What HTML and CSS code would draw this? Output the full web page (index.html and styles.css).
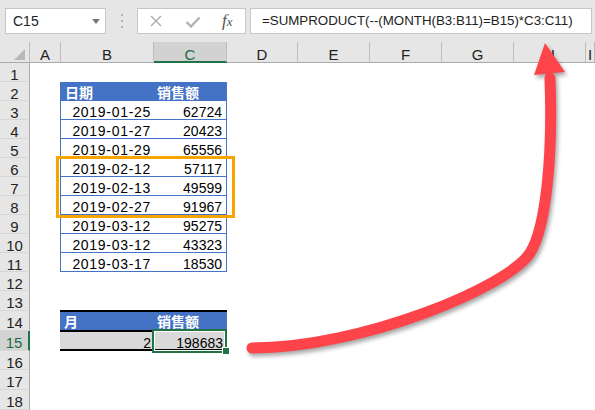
FILE: index.html
```html
<!DOCTYPE html>
<html lang="zh-CN">
<head>
<meta charset="utf-8">
<title>SUMPRODUCT</title>
<link rel="stylesheet" href="styles.css">
</head>
<body>
<div class="app">
  <div class="fbar">
    <div class="namebox"><span>C15</span><span class="caret"></span></div>
    <div class="grip"><i></i><i></i><i></i></div>
    <div class="btns">
      <svg class="ic-x" width="12" height="12" viewBox="0 0 12 12"><path d="M1 1L11 11M11 1L1 11"/></svg>
      <svg class="ic-ok" width="16" height="12" viewBox="0 0 16 12"><path d="M1.5 6L6 10.5L14.5 1.5"/></svg>
      <span class="fx"><i>f</i><i class="sub">x</i></span>
    </div>
    <div class="formula">=SUMPRODUCT(--(MONTH(B3:B11)=B15)*C3:C11)</div>
  </div>

  <div class="sheet">
    <div class="corner"><span class="tri"></span></div>
    <div class="ch">A</div>
    <div class="ch">B</div>
    <div class="ch on">C</div>
    <div class="ch">D</div>
    <div class="ch">E</div>
    <div class="ch">F</div>
    <div class="ch">G</div>
    <div class="ch">H</div>
    <div class="ch">I</div>

    <div class="rh">1</div>
    <div class="rh">2</div>
    <div class="rh">3</div>
    <div class="rh">4</div>
    <div class="rh">5</div>
    <div class="rh">6</div>
    <div class="rh">7</div>
    <div class="rh">8</div>
    <div class="rh">9</div>
    <div class="rh">10</div>
    <div class="rh">11</div>
    <div class="rh">12</div>
    <div class="rh">13</div>
    <div class="rh">14</div>
    <div class="rh on">15</div>
    <div class="rh">16</div>
    <div class="rh">17</div>
    <div class="rh">18</div>

    <div class="t1">
      <div class="tr hd"><div class="c1">日期</div><div class="c2">销售额</div></div>
      <div class="tr"><div class="c1 num date">2019-01-25</div><div class="c2 num">62724</div></div>
      <div class="tr"><div class="c1 num date">2019-01-27</div><div class="c2 num">20423</div></div>
      <div class="tr"><div class="c1 num date">2019-01-29</div><div class="c2 num">65556</div></div>
      <div class="tr"><div class="c1 num date">2019-02-12</div><div class="c2 num">57117</div></div>
      <div class="tr"><div class="c1 num date">2019-02-13</div><div class="c2 num">49599</div></div>
      <div class="tr"><div class="c1 num date">2019-02-27</div><div class="c2 num">91967</div></div>
      <div class="tr"><div class="c1 num date">2019-03-12</div><div class="c2 num">95275</div></div>
      <div class="tr"><div class="c1 num date">2019-03-12</div><div class="c2 num">43323</div></div>
      <div class="tr"><div class="c1 num date">2019-03-17</div><div class="c2 num">18530</div></div>
    </div>

    <div class="box"></div>

    <div class="t2">
      <div class="tr hd"><div class="c1">月</div><div class="c2">销售额</div></div>
      <div class="tr tot">
        <div class="c1 num">2</div><div class="c2 num">198683</div>
        <div class="sel"></div>
        <div class="handle"></div>
      </div>
    </div>
  </div>

  <svg class="arrow" width="595" height="410" viewBox="0 0 595 410">
    <path d="M252 348 C362 348 508 287 530 253 C546 228 553 156 550 78" fill="none" stroke="#fe444b" stroke-width="11" stroke-linecap="round"/>
    <polygon points="545,43 534,75 565,72" fill="#fe444b"/>
  </svg>
</div>
</body>
</html>
```

FILE: styles.css
```css
* { box-sizing: border-box; margin: 0; padding: 0; }

body {
  width: 595px;
  height: 410px;
  overflow: hidden;
  background: #fff;
  font-family: "Liberation Sans", Arial, sans-serif;
  color: #000;
}

.app {
  position: relative;
  width: 595px;
  height: 410px;
  overflow: hidden;
}

/* ---------- formula bar ---------- */
.fbar {
  height: 42px;
  background: #e6e6e6;
  display: flex;
  align-items: center;
  padding-left: 5px;
}

.namebox {
  width: 101px;
  height: 26px;
  background: #fff;
  border: 1px solid #c6c6c6;
  display: flex;
  align-items: center;
  justify-content: space-between;
  padding: 0 5px 0 7px;
  font-size: 14px;
  color: #222;
}

.caret {
  width: 0;
  height: 0;
  border-left: 4px solid transparent;
  border-right: 4px solid transparent;
  border-top: 5px solid #7a7a7a;
}

.grip {
  width: 31px;
  display: flex;
  flex-direction: column;
  align-items: center;
  gap: 4px;
}

.grip i {
  display: block;
  width: 2px;
  height: 2px;
  background: #b3b3b3;
}

.btns {
  width: 109px;
  height: 26px;
  background: #fff;
  border: 1px solid #c6c6c6;
  display: flex;
  align-items: center;
  padding-left: 12px;
}

.ic-x {
  fill: none;
  stroke: #ababab;
  stroke-width: 1.4;
  margin-right: 23px;
}

.ic-ok {
  fill: none;
  stroke: #b3b3b3;
  stroke-width: 2.4;
  margin-right: 21px;
  margin-top: 2px;
}

.fx {
  font-family: "Liberation Serif", serif;
  color: #555;
  font-size: 17px;
  line-height: 20px;
}

.fx .sub {
  font-size: 13px;
}

.formula {
  flex: 1;
  height: 26px;
  margin: 0 3px 0 4px;
  background: #fff;
  border: 1px solid #c6c6c6;
  padding-left: 11px;
  font-size: 13.3px;
  line-height: 24px;
  color: #222;
  white-space: nowrap;
  overflow: hidden;
}

/* ---------- sheet ---------- */
.sheet {
  display: grid;
  grid-template-columns: 30px 31px 93px 73px 71px 72px 72px 72px 72px 1fr;
  grid-template-rows: 21px repeat(12, 19px) 20px 20px 20px 19px 20px 20px;
}

.corner {
  background: #e6e6e6;
  border-right: 1px solid #bdbdbd;
  border-bottom: 1px solid #ababab;
  padding: 7px 0 0 14px;
}

.tri {
  display: block;
  width: 0;
  height: 0;
  border-left: 11px solid transparent;
  border-bottom: 11px solid #b8b8b8;
}

.ch {
  background: #e6e6e6;
  border-right: 1px solid #bdbdbd;
  border-bottom: 1px solid #ababab;
  text-align: center;
  font-size: 15px;
  line-height: 18px;
  padding-top: 4px;
  color: #222;
}

.ch.on {
  background: #d2d2d2;
  border-bottom: 2px solid #217346;
  color: #1d6b41;
}

.rh {
  grid-column: 1;
  background: #e6e6e6;
  border-right: 1px solid #ababab;
  border-bottom: 1px solid #d6d6d6;
  text-align: center;
  font-size: 15px;
  line-height: 18px;
  padding-top: 3px;
  color: #222;
}

.rh.on {
  background: #d2d2d2;
  border-right: 2px solid #217346;
  color: #1d6b41;
}

/* tables */
.t1 {
  grid-column: 3 / 5;
  grid-row: 3 / 13;
  margin-left: -1px;
  border-left: 1px solid #4472c4;
  border-right: 1px solid #4472c4;
  display: flex;
  flex-direction: column;
}

.tr {
  display: flex;
  flex: none;
  height: 19px;
  border-bottom: 1px solid #4472c4;
}

.c1 { width: 93px; flex: none; }
.c2 { flex: 1; }

.num {
  text-align: right;
  padding: 3px 3px 0 0;
  font-size: 14px;
  line-height: 16px;
  white-space: nowrap;
}

.c2.num { padding-right: 4px; }

.date { letter-spacing: 0.7px; }

.hd {
  background: #4472c4;
}

.hd .c1,
.hd .c2 {
  color: #fff;
  font-family: "Noto Sans CJK SC", "Liberation Sans", sans-serif;
  font-weight: 700;
  font-size: 14px;
  line-height: 16px;
  padding-top: 2px;
}

.hd .c1 { padding-left: 4px; }
.hd .c2 { padding-left: 3px; }

.box {
  grid-column: 3 / 5;
  grid-row: 7 / 10;
  margin: -2px -8px -3px -5px;
  border: 3px solid #f5a400;
}

.t2 {
  grid-column: 3 / 5;
  grid-row: 15 / 17;
  margin: -1px 0 0 -1px;
  display: flex;
  flex-direction: column;
}

.t2 .c1 { width: 94px; }

.t2 .hd {
  height: 20px;
  border-top: 2px solid #000;
  border-bottom: none;
}

.t2 .hd .c1,
.t2 .hd .c2 { padding-top: 1px; }

.tot {
  position: relative;
  height: 21px;
  border-top: 2px solid #000;
  border-bottom: 2px solid #000;
  background: #d9d9d9;
}

.sel {
  position: absolute;
  left: 92px;
  top: -3px;
  width: 75px;
  height: 24px;
  border: 2px solid #217346;
  box-shadow: inset 0 0 0 1px #fff;
}

.handle {
  position: absolute;
  left: 162px;
  top: 15px;
  width: 8px;
  height: 8px;
  background: #217346;
  border: 1px solid #fff;
}

/* arrow overlay */
.arrow {
  position: absolute;
  left: 0;
  top: 0;
  pointer-events: none;
  filter: drop-shadow(2px 3px 2px rgba(0, 0, 0, 0.35));
}
```
